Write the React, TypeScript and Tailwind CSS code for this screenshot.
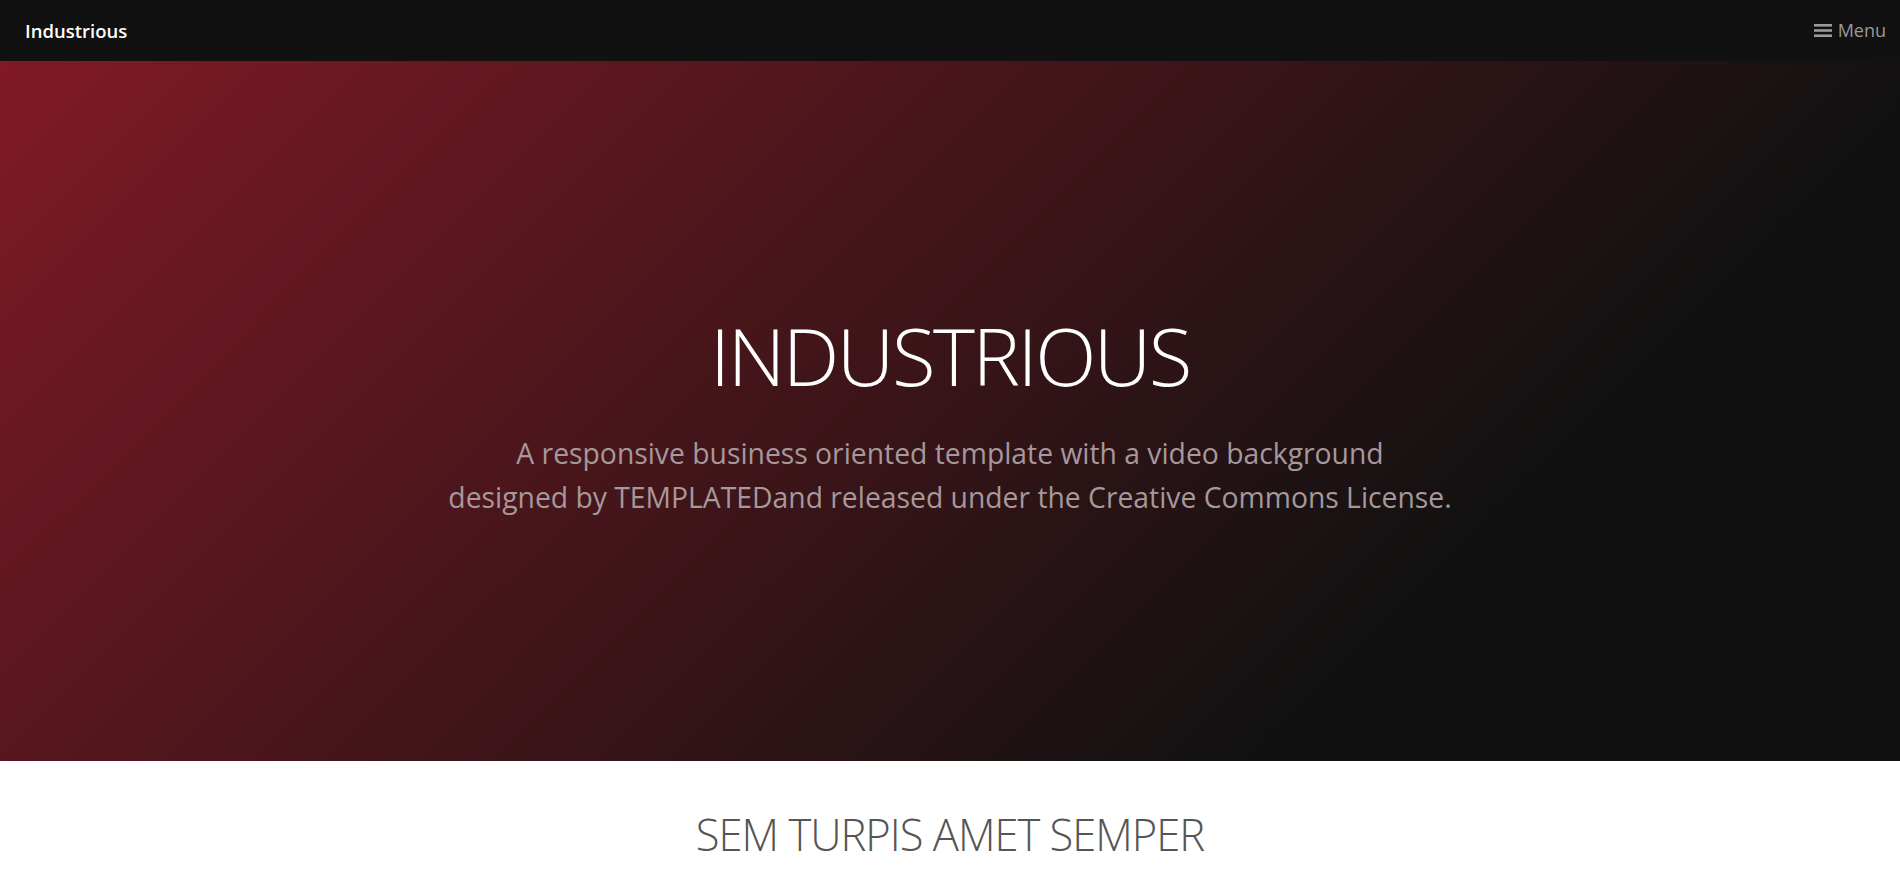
// Industrious landing page — header, gradient banner, first section heading

const FONT = { fontFamily: '"Open Sans", "Segoe UI", sans-serif' };

function MenuIcon() {
  return (
    <svg width="18" height="15" viewBox="0 0 18 15" className="mr-[6px]" aria-hidden>
      <rect x="0" y="1" width="18" height="2.6" fill="currentColor" />
      <rect x="0" y="6.2" width="18" height="2.6" fill="currentColor" />
      <rect x="0" y="11.4" width="18" height="2.6" fill="currentColor" />
    </svg>
  );
}

function Header() {
  return (
    <header className="h-[61px] bg-[#111111] flex items-center justify-between pl-[25px] pr-[14px]">
      <a className="text-white text-[18.5px] font-semibold">Industrious</a>
      <a className="flex items-center text-[#9a9a9a] text-[18px]">
        <MenuIcon />
        Menu
      </a>
    </header>
  );
}

function Banner() {
  return (
    <section className="h-[700px] pt-[12px] flex flex-col items-center justify-center text-center bg-[linear-gradient(135deg,#801a25_0%,#111111_75%)]">
      <h1 className="text-white text-[80px] font-light leading-none tracking-[-2.5px] mb-[36px]">INDUSTRIOUS</h1>
      <p className="text-[#a6989b] text-[28.3px] leading-[44px]">
        A responsive business oriented template with a video background
        <br />
        designed by TEMPLATEDand released under the Creative Commons License.
      </p>
    </section>
  );
}

export default function App() {
  return (
    <div style={FONT} className="min-h-screen bg-white">
      <Header />
      <Banner />
      <section className="pt-[52px] pb-20 text-center">
        <h2 className="text-[43.5px] font-light text-[#555555] leading-none tracking-[-1px]">SEM TURPIS AMET SEMPER</h2>
      </section>
    </div>
  );
}
